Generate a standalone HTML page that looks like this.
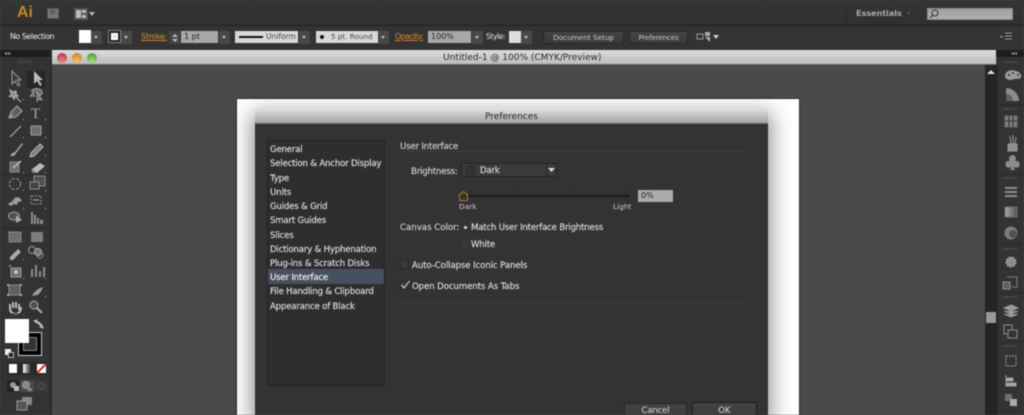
<!DOCTYPE html>
<html><head><meta charset="utf-8"><style>
html,body{margin:0;padding:0;background:#4a4a4a}
#p{position:relative;width:1024px;height:415px;overflow:hidden;background:#4a4a4a;font-family:"DejaVu Sans","Liberation Sans",sans-serif;font-size:9px;color:#d2d2d2;filter:blur(.4px)}
#p div,#p span.a{position:absolute;box-sizing:border-box}
.t{white-space:nowrap;line-height:12px}
.d{margin-top:1px;font-size:8.6px;letter-spacing:-.2px;-webkit-text-stroke:.15px currentColor}
.l{left:270px;color:#dedede}
.b{background:linear-gradient(#444,#3a3a3a);border:1px solid #262626;color:#c8c8c8;text-align:center;border-radius:1px}
.c{font-size:7.8px;-webkit-text-stroke:.12px currentColor}
.dd{background:#484848;width:11px;height:13px}
.dd:after{content:"";position:absolute;left:3px;top:5px;border:2.500px solid transparent;border-top:3.500px solid #bbb}
svg{position:absolute}
.ic{opacity:.88}
</style></head><body><div id="p">

<!-- top bars -->
<div style="left:0;top:0;width:1024px;height:25px;background:linear-gradient(#353535,#303030)"></div>
<div style="left:0;top:25px;width:1024px;height:25px;background:#333;border-top:1px solid #222"></div>
<div class="t" style="left:17px;top:4px;font:bold 16px 'Liberation Sans',sans-serif;color:#c08a22;line-height:18px">Ai</div>
<div style="left:47px;top:8px;width:12px;height:11px;background:#777;border:1px solid #555;font-size:5px;line-height:9px;color:#333;text-align:center">Br</div>
<svg style="left:74px;top:7px" width="22" height="14"><rect x="0" y="1" width="14" height="12" fill="#555"/><rect x="2" y="3" width="5" height="8" fill="#bbb"/><rect x="8" y="3" width="4" height="3" fill="#bbb"/><rect x="8" y="8" width="4" height="3" fill="#bbb"/><path d="M15 5h6l-3 4z" fill="#bbb"/></svg>
<div style="left:846px;top:5px;width:1px;height:19px;background:#262626"></div>
<div class="t" style="left:856px;top:7px;font-weight:bold;font-size:8.2px;letter-spacing:-.1px;color:#aaa">Essentials</div>
<div class="t" style="left:907px;top:7px;color:#999">-</div>
<div style="left:927px;top:8px;width:86px;height:12px;background:linear-gradient(#a0a0a0,#b0b0b0);border:1px solid #888"></div>
<svg style="left:929px;top:9px" width="10" height="10"><circle cx="6" cy="4" r="3" fill="none" stroke="#333"/><path d="M4 6L1 9" stroke="#333" stroke-width="1.200"/></svg>

<!-- control bar -->
<div class="t c" style="left:10px;top:31px;letter-spacing:-.4px;color:#d8d8d8">No Selection</div>
<div style="left:79px;top:30px;width:12px;height:13px;background:#fff"></div>
<div class="dd" style="left:91px;top:31px"></div>
<div style="left:108px;top:30px;width:13px;height:13px;background:#111;border:1px solid #888"></div>
<div style="left:111px;top:33px;width:7px;height:7px;background:#ddd;border:2px solid #fff;outline:1px solid #333"></div>
<div class="dd" style="left:121px;top:31px"></div>
<div class="t c" style="left:141px;top:31px;color:#c8812e;text-decoration:underline;letter-spacing:-.2px">Stroke:</div>
<div style="left:169px;top:31px;width:11px;height:13px;background:#444"></div>
<svg style="left:171px;top:33px" width="8" height="10"><path d="M1 4l3-3 3 3zM1 6l3 3 3-3z" fill="#bbb"/></svg>
<div style="left:181px;top:31px;width:37px;height:12px;background:#a8a8a8;color:#222;font-size:8px;line-height:12px;padding-left:3px">1 pt</div>
<div class="dd" style="left:219px;top:31px"></div>
<div style="left:235px;top:31px;width:63px;height:12px;background:#d8d8d8;color:#444;font-size:7.5px;line-height:12px;padding-left:31px">Uniform</div>
<div style="left:239px;top:36px;width:24px;height:2px;background:#111"></div>
<div class="dd" style="left:299px;top:31px"></div>
<div style="left:316px;top:31px;width:62px;height:12px;background:#d8d8d8;color:#444;font-size:7.2px;line-height:12px;padding-left:15px">5 pt. Round</div>
<div style="left:320px;top:35px;width:4px;height:4px;background:#111;border-radius:50%"></div>
<div class="dd" style="left:378px;top:31px"></div>
<div class="t c" style="left:395px;top:31px;color:#c8812e;text-decoration:underline;letter-spacing:-.5px">Opacity:</div>
<div style="left:428px;top:31px;width:43px;height:12px;background:#a8a8a8;color:#222;font-size:8px;line-height:12px;padding-left:3px">100%</div>
<div class="dd" style="left:472px;top:31px"></div>
<div class="t c" style="left:486px;top:31px;letter-spacing:-.5px;color:#c8c8c8">Style:</div>
<div style="left:509px;top:31px;width:12px;height:12px;background:#ddd"></div>
<div class="dd" style="left:521px;top:31px"></div>
<div class="b t" style="left:543px;top:31px;width:81px;height:13px;font-size:7.400px;letter-spacing:-.1px;line-height:12px">Document Setup</div>
<div class="b t" style="left:629px;top:31px;width:59px;height:13px;font-size:7.200px;letter-spacing:-.2px;line-height:12px">Preferences</div>
<svg style="left:696px;top:32px" width="24" height="11"><rect x="1" y="2" width="6" height="5" fill="none" stroke="#999"/><path d="M9 0h5v4h-5zM9 5l5 5v-5z" fill="#aaa"/><path d="M17 3h6l-3 4z" fill="#ccc"/></svg>
<svg style="left:1000px;top:32px" width="14" height="10"><path d="M0 4h3l-1.500 2z" fill="#aaa"/><path d="M5 1h7M5 4h7M5 7h7" stroke="#999"/></svg>

<!-- left toolbar -->
<div style="left:0;top:50px;width:52px;height:365px;background:#333"></div>
<div style="left:0;top:50px;width:52px;height:7px;background:#1d1d1d"></div>
<div class="t" style="left:4px;top:48px;font-size:6px;color:#999">◂◂</div>
<div style="left:50px;top:50px;width:2px;height:365px;background:#2a2a2a"></div>
<svg class="ic" style="left:0;top:50px" width="52" height="365" fill="none">
<g transform="translate(0,-50)">
<path d="M18 61h14M18 63h14" stroke="#555" stroke-dasharray="2 1"/>
<rect x="27" y="71" width="18" height="17" fill="#242424"/>
<path d="M12 71v13l3-3 3 5 2-1-3-5h4z" stroke="#aaa" fill="#3c3c3c"/>
<path d="M34 71v13l3-3 3 5 2-1-3-5h4z" fill="#ccc"/>
<path d="M10 90l3 2 3-1 0 3 2 2-3 .5-1 3-1.500-3-3 0 2-2.500zM15 96l6 6" stroke="#ccc" fill="#999"/>
<path d="M31 91c4-4 10-3 11 1 1 3-3 4-4 3M30 97l3-5 2 5M37 92v9l2-2 3 1z" stroke="#aaa" fill="#777"/>
<path d="M9 118l2-6 6-6 5 5-6 6zM9 118l4-4" stroke="#bbb" fill="#666"/>
<text x="31" y="118" font-family="Liberation Serif" font-size="15" fill="#bbb" stroke="none">T</text>
<path d="M10 137l11-11" stroke="#bbb" stroke-width="1.200"/>
<rect x="31" y="126" width="10" height="9" fill="#777" stroke="#aaa"/>
<path d="M10 156c2-3 3-3 5-4l7-9 1 1-7 9c-1 3-3 3-6 3z" fill="#bbb"/>
<path d="M31 153l9-9 3 3-9 9-4 1z" fill="#888" stroke="#ccc"/>
<path d="M10 162h9v10h-9z" fill="#777" stroke="#999"/><path d="M13 168l8-7" stroke="#ccc" stroke-width="1.500"/>
<path d="M31 170l9-7 5 3-8 7h-4z" fill="#ccc"/><path d="M31 170l5 3" stroke="#555"/>
<circle cx="15" cy="184" r="5.500" stroke="#aaa" stroke-dasharray="3 1.500"/>
<path d="M34 176h11v10h-11z" stroke="#999" fill="#555"/><path d="M30 182h9v7h-9z" stroke="#999" fill="#444"/>
<path d="M8 204c3-3 4-1 5-4l3-3 4 1 2 3-4 1-1 3-3-1-3 2z" fill="#aaa"/>
<rect x="31" y="196" width="10" height="8" stroke="#aaa" stroke-dasharray="2 1.500"/><path d="M33 200h6" stroke="#ccc"/>
<ellipse cx="14" cy="216" rx="5.500" ry="4" fill="#555" stroke="#aaa"/><path d="M16 215l6 5-6 3z" fill="#bbb"/>
<path d="M31 212h2v12h-2zM34 215h2v9h-2zM37 218h2v6h-2zM40 220h3v4h-3z" fill="#999"/>
<rect x="9" y="232" width="12" height="10" fill="#777" stroke="#aaa" stroke-dasharray="2 1"/>
<rect x="31" y="232" width="12" height="10" fill="#888"/>
<path d="M10 257l8-8 3 3-8 8h-3z" fill="#bbb"/>
<circle cx="32" cy="250" r="3.500" stroke="#aaa"/><circle cx="38" cy="252" r="3.500" fill="#777" stroke="#bbb"/><circle cx="40" cy="255" r="3" stroke="#999"/>
<path d="M11 268h10v9h-10z" fill="#777" stroke="#aaa"/><circle cx="16" cy="272" r="2" fill="#ddd"/><circle cx="10" cy="266" r="1" fill="#aaa"/>
<path d="M31 269h2v8h-2zM35 265h2v12h-2zM39 271h2v6h-2zM43 267h2v10h-2z" fill="#999"/>
<rect x="9" y="285" width="11" height="10" fill="#666" stroke="#999"/><path d="M7 285h2M20 285h2M7 295h2M20 295h2" stroke="#bbb" stroke-width="2"/>
<path d="M32 296c2-5 7-8 11-9-1 3-3 7-6 8z" fill="#aaa"/>
<path d="M10 304v4M13 302v6M16 302v6M19 304v6M10 308c0 5 3 6 6 6s5-3 5-7" stroke="#ccc" stroke-width="2"/>
<circle cx="34" cy="305" r="4" stroke="#bbb" fill="#555"/><path d="M37 308l5 5" stroke="#bbb" stroke-width="2"/>
<g fill="#ccc"><path d="M23 99h1v1h-1zM23 119h1v1h-1zM45 119h1v1h-1zM23 137h1v1h-1zM45 137h1v1h-1zM45 155h1v1h-1zM23 172h1v1h-1zM45 172h1v1h-1zM23 190h1v1h-1zM45 190h1v1h-1zM23 208h1v1h-1zM45 208h1v1h-1zM23 259h1v1h-1zM23 278h1v1h-1zM45 278h1v1h-1zM45 296h1v1h-1zM23 314h1v1h-1z"/></g>
<path d="M1 175h50M1 228h50M1 314h50" stroke="#292929"/>
</g></svg>
<div style="left:18px;top:332px;width:24px;height:24px;background:#000;border:1px solid #ccc"></div>
<div style="left:23px;top:337px;width:14px;height:14px;background:#333;border:1px solid #888"></div>
<div style="left:5px;top:319px;width:24px;height:24px;background:#fff"></div>
<svg style="left:33px;top:319px" width="12" height="12"><path d="M2 3c4-1 6 1 7 5M1 2l3-1v3zM10 9l-3-1 2-2z" stroke="#bbb" fill="#bbb"/></svg>
<div style="left:5px;top:349px;width:6px;height:6px;background:#eee"></div>
<div style="left:8px;top:352px;width:6px;height:6px;background:#222;border:1px solid #bbb"></div>
<div style="left:7px;top:362px;width:39px;height:13px;background:#292929"></div>
<div style="left:9px;top:364px;width:8px;height:9px;background:#fff"></div>
<div style="left:23px;top:364px;width:8px;height:9px;background:linear-gradient(90deg,#fff,#222)"></div>
<svg style="left:37px;top:364px" width="9" height="9"><rect width="9" height="9" fill="#fff"/><path d="M0 9L9 0" stroke="#d22" stroke-width="2"/></svg>
<div style="left:7px;top:380px;width:13px;height:12px;background:#242424"></div>
<div style="left:20px;top:380px;width:14px;height:12px;background:#4a4a4a"></div>
<div style="left:34px;top:380px;width:14px;height:12px;background:#3a3a3a"></div>
<svg style="left:7px;top:380px" width="41" height="13" fill="none"><circle cx="6" cy="5" r="3" fill="#999"/><rect x="7" y="6" width="5" height="5" fill="#bbb"/><circle cx="19" cy="5" r="3.500" stroke="#999" fill="#888"/><path d="M20 8h5v3h-4z" fill="#888"/><circle cx="34" cy="6" r="3" stroke="#555"/></svg>
<svg style="left:16px;top:397px" width="17" height="14"><rect x="6" y="0" width="10" height="8" fill="#888"/><rect x="1" y="4" width="10" height="9" fill="#555" stroke="#999"/></svg>

<!-- document -->
<div style="left:52px;top:50px;width:944px;height:15px;background:linear-gradient(#dcdcdc,#bcbcbc);border-bottom:1px solid #666"></div>
<div style="left:57px;top:53px;width:10px;height:10px;border-radius:50%;background:radial-gradient(circle at 50% 85%,#e88a8a,#b02c34)"></div>
<div style="left:72px;top:53px;width:10px;height:10px;border-radius:50%;background:radial-gradient(circle at 50% 85%,#f6c468,#c87820)"></div>
<div style="left:87px;top:53px;width:10px;height:10px;border-radius:50%;background:radial-gradient(circle at 50% 85%,#a0dc80,#489030)"></div>
<div class="t" style="left:443px;top:52px;font-size:9px;color:#2a2a2a">Untitled-1 @ 100% (CMYK/Preview)</div>

<!-- scrollbar + right panels -->
<div style="left:985px;top:65px;width:12px;height:350px;background:#242424"></div>
<div style="left:986px;top:312px;width:10px;height:11px;background:#999"></div>
<svg style="left:987px;top:69px" width="8" height="6"><path d="M0 5l4-4 4 4z" fill="#ddd"/></svg>
<div style="left:996px;top:50px;width:28px;height:7px;background:#1d1d1d"></div>
<div style="left:997px;top:57px;width:27px;height:358px;background:#333;border-left:1px solid #282828"></div>
<div class="t" style="left:1011px;top:48px;font-size:6px;color:#999">◂◂</div>
<svg class="ic" style="left:996px;top:57px" width="28" height="358" fill="none"><g transform="translate(-996,-57)">
<path d="M1003 62h14M1003 109h14M1003 178h14M1003 249h14M1003 297h14M1003 346h14" stroke="#666" stroke-dasharray="2 1"/>
<path d="M997 105h27M997 174h27M997 244h27M997 293h27M997 342h27M997 411h27" stroke="#262626"/>
<path d="M1005 76c0-5 6-7 11-5 4 1 6 4 5 6-1 3-4 1-7 2-3 2-9 1-9-3z" fill="#aaa"/><circle cx="1009" cy="75" r="1" fill="#333"/><circle cx="1013" cy="73" r="1" fill="#333"/><circle cx="1018" cy="75" r="1" fill="#333"/>
<path d="M1006 88v13h13c0-7-6-13-13-13z" fill="#999"/><path d="M1006 94c4 0 7 3 7 7h-7z" fill="#666"/>
<rect x="1005" y="116" width="12" height="11" fill="#888" stroke="#777"/><path d="M1009 116v11M1013 116v11M1005 121h12" stroke="#333"/>
<path d="M1008 144h9v7h-9zM1010 136l1 8M1013 135v9M1016 137l-1 7" stroke="#aaa" fill="#999"/>
<path d="M1010 161a3.500 3.500 0 1 1 5 0 3.500 3.500 0 1 1-1 6c0 1 0 2 1 3h-5c1-1 1-2 1-3a3.500 3.500 0 1 1-1-6z" fill="#999"/>
<path d="M1005 188h12M1005 192h12M1005 196h12" stroke="#999" stroke-width="2"/>
<rect x="1005" y="207" width="12" height="10" fill="url(#g1)" stroke="#777"/>
<circle cx="1011" cy="233" r="6.500" fill="#888"/><circle cx="1013" cy="234" r="4" fill="#555"/>
<circle cx="1011" cy="262" r="5" fill="#999" stroke="#bbb" stroke-dasharray="2 1.500"/>
<path d="M1007 277h10v10h-5" stroke="#888"/><rect x="1003" y="282" width="7" height="7" fill="#666" stroke="#999"/>
<path d="M1011 305l7 3-7 3-7-3zM1004 311l7 3 7-3M1004 314l7 3 7-3" fill="#aaa" stroke="#aaa"/>
<rect x="1004" y="325" width="8" height="9" stroke="#999"/><rect x="1008" y="330" width="9" height="8" stroke="#999" fill="#333"/>
<rect x="1006" y="356" width="10" height="10" stroke="#aaa" stroke-dasharray="2 1"/>
<path d="M1006 375v9M1006 378h7v3h-7zM1006 383h10v3h-10z" fill="#bbb" stroke="#aaa"/>
<rect x="1005" y="394" width="7" height="7" fill="#777"/><rect x="1010" y="399" width="7" height="7" fill="#bbb"/>
</g><defs><linearGradient id="g1"><stop offset="0" stop-color="#bbb"/><stop offset="1" stop-color="#555"/></linearGradient></defs></svg>

<!-- artboard -->
<div style="left:237px;top:99px;width:562px;height:316px;background:#fff;box-shadow:0 0 0 1px #2e2e2e"></div>

<!-- dialog -->
<div style="left:255px;top:108px;width:513px;height:307px;background:#333;box-shadow:0 8px 20px 3px rgba(0,0,0,.45)"></div>
<div style="left:255px;top:108px;width:513px;height:16px;background:linear-gradient(#e4e4e4,#a2a2a2);border-bottom:1px solid #666"></div>
<div class="t" style="left:255px;width:513px;top:111px;text-align:center;font-size:9px;color:#222">Preferences</div>

<div style="left:267px;top:140px;width:118px;height:246px;background:#2e2e2e;border:1px solid #222"></div>
<div style="left:268px;top:269px;width:116px;height:15px;background:#46505f"></div>
<div class="t d l" style="top:143px">General</div>
<div class="t d l" style="top:157px">Selection &amp; Anchor Display</div>
<div class="t d l" style="top:172px">Type</div>
<div class="t d l" style="top:186px">Units</div>
<div class="t d l" style="top:200px">Guides &amp; Grid</div>
<div class="t d l" style="top:214px">Smart Guides</div>
<div class="t d l" style="top:229px">Slices</div>
<div class="t d l" style="top:243px">Dictionary &amp; Hyphenation</div>
<div class="t d l" style="top:257px">Plug-ins &amp; Scratch Disks</div>
<div class="t d l" style="top:271px;color:#eee">User Interface</div>
<div class="t d l" style="top:285px">File Handling &amp; Clipboard</div>
<div class="t d l" style="top:300px">Appearance of Black</div>

<div class="t d" style="left:400px;top:140px;color:#ccc">User Interface</div>
<div style="left:400px;top:151px;width:346px;height:1px;background:#3d3d3d"></div>
<div class="t d" style="left:411px;top:165px;color:#d0d0d0">Brightness:</div>
<div style="left:461px;top:163px;width:96px;height:14px;background:#3b3b3b;border:1px solid #222"></div>
<div style="left:466px;top:166px;width:9px;height:9px;background:#333;border:1px solid #2a2a2a"></div>
<div class="t d" style="left:480px;top:164px;color:#d8d8d8">Dark</div>
<div style="left:546px;top:164px;width:1px;height:12px;background:#292929"></div>
<svg style="left:548px;top:168px" width="7" height="5"><path d="M0 0h7L3.500 4z" fill="#ddd"/></svg>
<div style="left:465px;top:195px;width:165px;height:2px;background:#1c1c1c"></div>
<div style="left:517px;top:191px;width:1px;height:4px;background:#222"></div>
<div style="left:570px;top:191px;width:1px;height:4px;background:#222"></div>
<div style="left:625px;top:191px;width:1px;height:4px;background:#222"></div>
<svg style="left:458px;top:190px" width="12" height="12"><path d="M1.500 10.500V5L5.500 1.500 9.500 5v5.500z" fill="#3a3028" stroke="#b07a3c"/></svg>
<div class="t" style="left:459px;top:201px;font-size:7.400px;color:#ccc">Dark</div>
<div class="t" style="left:613px;top:201px;font-size:7.400px;color:#ccc">Light</div>
<div style="left:638px;top:190px;width:35px;height:12px;background:#ababab;color:#222;font-size:8px;line-height:12px;padding-left:3px">0%</div>
<div class="t d" style="left:400px;top:221px;color:#d0d0d0;letter-spacing:0">Canvas Color:</div>
<div style="left:464px;top:226px;width:3px;height:3px;background:#ddd;border-radius:50%"></div>
<div class="t d" style="left:471px;top:221px;color:#dcdcdc">Match User Interface Brightness</div>
<div style="left:461px;top:239px;width:9px;height:9px;background:#393939;border-radius:50%"></div>
<div class="t d" style="left:471px;top:238px;color:#dcdcdc">White</div>
<div style="left:400px;top:260px;width:9px;height:9px;background:#3a3a3a;border:1px solid #2a2a2a"></div>
<div class="t d" style="left:412px;top:259px;color:#dcdcdc;letter-spacing:-.1px">Auto-Collapse Iconic Panels</div>
<div style="left:400px;top:281px;width:9px;height:9px;background:#3a3a3a;border:1px solid #2a2a2a"></div>
<svg style="left:400px;top:280px" width="11" height="10"><path d="M1.500 5l2.500 3 5.500-7" stroke="#e0e0e0" fill="none"/></svg>
<div class="t d" style="left:412px;top:280px;color:#dcdcdc;letter-spacing:-.1px">Open Documents As Tabs</div>
<div style="left:400px;top:302px;width:346px;height:1px;background:#3d3d3d"></div>
<div class="b t" style="left:624px;top:403px;width:63px;height:20px;font-size:8.600px;letter-spacing:-.2px;line-height:15px;color:#ddd">Cancel</div>
<div class="b t" style="left:692px;top:402px;width:65px;height:21px;font-size:8.600px;line-height:16px;color:#ddd;border-color:#1c1c1c">OK</div>
</div></body></html>
